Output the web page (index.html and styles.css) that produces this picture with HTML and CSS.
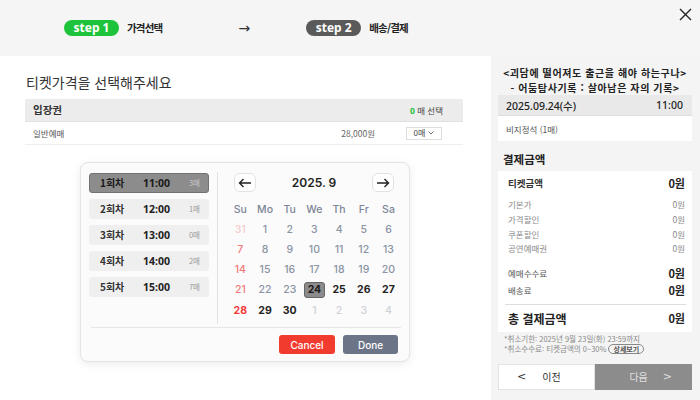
FILE: index.html
```html
<!DOCTYPE html>
<html lang="ko">
<head>
<meta charset="utf-8">
<link rel="stylesheet" href="styles.css">
</head>
<body>
<div class="page">
  <header class="top">
    <div class="step">
      <span class="pill pill-on">step 1</span>
      <span class="step-label">가격선택</span>
    </div>
    <span class="arrow">→</span>
    <div class="step">
      <span class="pill pill-off">step 2</span>
      <span class="step-label">배송/결제</span>
    </div>
    <svg class="close" width="13" height="13" viewBox="0 0 13 13" aria-label="닫기"><path d="M1 1L12 12M12 1L1 12" stroke="#222" stroke-width="1.4"/></svg>
  </header>
  <main class="main">
    <section class="left">
      <h1 class="title">티켓가격을 선택해주세요</h1>
      <div class="table">
        <div class="thead">
          <span class="th-name">입장권</span>
          <span class="th-sel"><b class="green">0</b> 매 선택</span>
        </div>
        <div class="trow">
          <span class="td-name">일반예매</span>
          <span class="td-price">28,000원</span>
          <span class="select">0매 <svg width="6" height="4" viewBox="0 0 6 4"><path d="M0.5 0.5L3 3L5.5 0.5" stroke="#777" fill="none" stroke-width="1"/></svg></span>
        </div>
      </div>

      <div class="popup">
        <div class="popup-top">
          <ul class="rounds">
            <li class="round active"><span class="r-no">1회차</span><span class="r-time">11:00</span><span class="r-cnt">3매</span></li>
            <li class="round"><span class="r-no">2회차</span><span class="r-time">12:00</span><span class="r-cnt">1매</span></li>
            <li class="round"><span class="r-no">3회차</span><span class="r-time">13:00</span><span class="r-cnt">0매</span></li>
            <li class="round"><span class="r-no">4회차</span><span class="r-time">14:00</span><span class="r-cnt">2매</span></li>
            <li class="round"><span class="r-no">5회차</span><span class="r-time">15:00</span><span class="r-cnt">7매</span></li>
          </ul>
          <div class="cal">
            <div class="cal-head">
              <span class="nav"><svg width="14" height="10" viewBox="0 0 14 10"><path d="M13 5H1.5M5.5 1L1.5 5L5.5 9" stroke="#222" stroke-width="1.4" fill="none"/></svg></span>
              <span class="month">2025. 9</span>
              <span class="nav"><svg width="14" height="10" viewBox="0 0 14 10"><path d="M1 5H12.5M8.5 1L12.5 5L8.5 9" stroke="#222" stroke-width="1.4" fill="none"/></svg></span>
            </div>
            <div class="grid">
              <span class="dn">Su</span><span class="dn">Mo</span><span class="dn">Tu</span><span class="dn">We</span><span class="dn">Th</span><span class="dn">Fr</span><span class="dn">Sa</span>
              <span class="d other-sun">31</span><span class="d past">1</span><span class="d past">2</span><span class="d past">3</span><span class="d past">4</span><span class="d past">5</span><span class="d past">6</span>
              <span class="d sun-past">7</span><span class="d past">8</span><span class="d past">9</span><span class="d past">10</span><span class="d past">11</span><span class="d past">12</span><span class="d past">13</span>
              <span class="d sun-past">14</span><span class="d past">15</span><span class="d past">16</span><span class="d past">17</span><span class="d past">18</span><span class="d past">19</span><span class="d past">20</span>
              <span class="d sun-past">21</span><span class="d past">22</span><span class="d past">23</span><span class="d"><i class="sel">24</i></span><span class="d on">25</span><span class="d on">26</span><span class="d on">27</span>
              <span class="d sun">28</span><span class="d on">29</span><span class="d on">30</span><span class="d other">1</span><span class="d other">2</span><span class="d other">3</span><span class="d other">4</span>
            </div>
          </div>
        </div>
        <div class="popup-line"></div>
        <div class="popup-btns">
          <button class="btn cancel">Cancel</button>
          <button class="btn done">Done</button>
        </div>
      </div>
    </section>

    <aside class="right">
      <div class="show-title"><p>&lt;괴담에 떨어져도 출근을 해야 하는구나&gt;</p><p>- 어둠탐사기록 : 살아남은 자의 기록&gt;</p></div>
      <div class="date-row"><span>2025.09.24(수)</span><span>11:00</span></div>
      <div class="seat-row">비지정석 (1매)</div>
      <h2 class="pay-title">결제금액</h2>
      <div class="pay-box">
        <div class="p-main"><span class="pl-b">티켓금액</span><span class="pv">0원</span></div>
        <div class="p-subs">
          <div class="p-sub"><span>기본가</span><span>0원</span></div>
          <div class="p-sub"><span>가격할인</span><span>0원</span></div>
          <div class="p-sub"><span>쿠폰할인</span><span>0원</span></div>
          <div class="p-sub"><span>공연예매권</span><span>0원</span></div>
        </div>
        <div class="p-fees">
          <div class="p-fee"><span>예매수수료</span><span class="pv">0원</span></div>
          <div class="p-fee"><span>배송료</span><span class="pv">0원</span></div>
        </div>
        <div class="p-total"><span>총 결제금액</span><span class="pv">0원</span></div>
      </div>
      <div class="notes">
        <p>*취소기한: 2025년 9월 23일(화) 23:59까지</p>
        <p>*취소수수료: 티켓금액의 0~30% <span class="detail">상세보기</span></p>
      </div>
      <div class="nav-btns">
        <button class="prev"><span class="chev">&lt;</span><span>이전</span></button>
        <button class="next"><span>다음</span><span class="chev">&gt;</span></button>
      </div>
    </aside>
  </main>
</div>
</body>
</html>
```

FILE: styles.css
```css
* { box-sizing: border-box; margin: 0; padding: 0; }
html, body { width: 700px; height: 400px; overflow: hidden; }
body {
  font-family: "Noto Sans CJK KR", "Noto Sans", sans-serif;
  color: #222;
  background: #fff;
}
button { font-family: inherit; border: none; background: none; cursor: pointer; outline: none; }
ul { list-style: none; }

.page { width: 700px; height: 400px; display: flex; flex-direction: column; }

/* header */
.top {
  height: 56px;
  background: #f5f5f5;
  display: flex;
  align-items: center;
  padding-left: 64px;
}
.step { display: flex; align-items: center; gap: 8px; }
.pill {
  display: inline-flex; align-items: center; justify-content: center;
  width: 55px; height: 16px; border-radius: 8px;
  color: #fff; font-family: "Noto Sans", sans-serif; font-weight: 700; font-size: 12px; line-height: 16px;
}
.pill-on { background: #1dc43b; }
.pill-off { background: #5a5a5a; }
.step-label { font-weight: 700; font-size: 10.5px; line-height: 16px; color: #222; letter-spacing: -0.8px; }
.arrow { margin-left: 76px; margin-right: 56px; font-family: "DejaVu Sans", sans-serif; font-size: 14px; color: #333; line-height: 16px; }
.close { margin-left: auto; align-self: flex-start; margin-top: 8px; margin-right: 8px; flex: none; }

/* main */
.main { flex: 1; display: flex; position: relative; }
.left { width: 491px; padding: 16px 28px 0 25px; position: relative; flex: none; }
.title { font-size: 14px; font-weight: 400; line-height: 20px; color: #333; margin-bottom: 7px; padding-left: 1px; }
.table { width: 438px; }
.thead {
  height: 23px; background: #ececec; display: flex; align-items: center; justify-content: space-between;
  padding: 0 20px 0 8px; border-bottom: 1px solid #e0e0e0;
}
.th-name { font-size: 10.5px; font-weight: 700; color: #333; line-height: 14px; }
.th-sel { font-size: 8.5px; color: #444; line-height: 12px; }
.green { color: #1dc43b; font-weight: 700; font-family: "Noto Sans", sans-serif; }
.trow {
  height: 23px; display: flex; align-items: center; padding: 0 21px 0 8px; border-bottom: 1px solid #efefef;
}
.td-name { flex: 1; font-size: 8.5px; color: #555; line-height: 12px; }
.td-price { font-size: 8.5px; color: #666; line-height: 12px; margin-right: 31px; }
.select {
  width: 36px; height: 13px; border: 1px solid #ddd; background: #fff;
  display: flex; align-items: center; justify-content: center; gap: 3px;
  font-size: 8px; color: #444; line-height: 10px;
}

/* popup */
.popup {
  position: absolute; left: 80px; top: 106px; width: 330px; height: 200px;
  background: #fbfbfb; border: 1px solid #e4e4e4; border-radius: 8px;
  box-shadow: 0 2px 8px rgba(0,0,0,0.08);
  padding: 9px 8px 0 8px;
}
.popup-top { display: flex; height: 152px; }
.rounds { flex: none; width: 120px; display: flex; flex-direction: column; gap: 6px; padding-top: 1px; margin-right: 8px; }
.round {
  height: 20px; border-radius: 3px; background: #efefef; display: flex; align-items: center;
  padding: 0 8px 0 10px; border: 1px solid #efefef;
}
.round.active { background: #8c8c8c; border-color: #727272; }
.r-no { font-size: 10px; font-weight: 700; color: #333; width: 43px; line-height: 14px; }
.r-time { font-family: "Noto Sans", sans-serif; font-size: 10.5px; font-weight: 700; color: #222; flex: 1; line-height: 14px; }
.r-cnt { font-size: 7.5px; color: #999; line-height: 10px; }
.round.active .r-cnt { color: #c9c9c9; }
.round.active .r-no, .round.active .r-time { color: #1a1a1a; }

.cal { flex: 1; border-left: 1px solid #e3e3e3; padding-left: 10px; }
.cal-head { display: flex; align-items: center; justify-content: space-between; padding: 0 7px 0 6px; width: 173px; height: 19px; margin-top: 1px; }
.nav {
  width: 22px; height: 19px; border: 1px solid #e2e2e2; border-radius: 6px; background: #fff;
  display: flex; align-items: center; justify-content: center;
}
.month { font-family: "Inter", sans-serif; font-weight: 600; font-size: 12px; color: #222; line-height: 16px; }
.grid { display: grid; grid-template-columns: repeat(7, 24.7px); grid-auto-rows: 20.2px; margin-top: 7px; }
.dn, .d {
  display: flex; align-items: center; justify-content: center;
  font-family: "Inter", sans-serif; font-size: 10.5px; font-weight: 500;
}
.dn { color: #7d8696; }
.d { color: #8a93a3; }
.d.on { color: #222; font-weight: 700; }
.d.sun { color: #f23a3a; font-weight: 700; }
.d.sun-past { color: #f07a7a; }
.d.other-sun { color: #f6cccc; }
.d.other { color: #cfd2d7; }
.sel {
  font-style: normal; width: 21px; height: 16px; border-radius: 3px; background: #8b8b8b; border: 1px solid #666;
  display: flex; align-items: center; justify-content: center; color: #1a1a1a; font-weight: 700;
}
.popup-line { height: 1px; background: #e6e6e6; margin: 3px 0 0 2px; }
.popup-btns { display: flex; justify-content: flex-end; gap: 8px; margin-top: 7px; padding-right: 3px; }
.btn {
  height: 19px; border-radius: 3px; color: #fff; font-family: "Inter", sans-serif; font-size: 10px; font-weight: 500;
  display: flex; align-items: center; justify-content: center;
}
.cancel { width: 56px; background: #f23b2f; }
.done { width: 55px; background: #6b7587; }

/* right */
.right { flex: none; width: 209px; background: #f4f4f4; padding: 10px 8px 0 7px; display: flex; flex-direction: column; }
.show-title { text-align: center; font-size: 10px; font-weight: 700; line-height: 14.5px; color: #222; letter-spacing: 0.6px; }
.show-title p { height: 14.5px; white-space: nowrap; }
.date-row {
  margin-top: 0; height: 21px; background: #e9e9e9; display: flex; align-items: center; justify-content: space-between;
  padding: 0 9px 0 8px; font-family: "Noto Sans", "Noto Sans CJK KR", sans-serif; font-size: 10.5px; font-weight: 500; color: #222;
  border-bottom: 1px solid #dedede;
}
.seat-row { height: 25px; background: #fff; display: flex; align-items: center; padding-left: 8px; font-size: 8.5px; color: #555; }
.pay-title { font-size: 11.5px; font-weight: 700; line-height: 16px; color: #222; margin: 10px 0 4px 5px; }
.pay-box { background: #fff; padding: 0 7px 0 10px; }
.p-main { height: 24px; display: flex; align-items: center; justify-content: space-between; }
.pl-b { font-size: 9.5px; font-weight: 700; color: #333; }
.pv { font-family: "Noto Sans CJK KR", sans-serif; font-size: 11px; font-weight: 700; color: #222; }
.p-subs { margin-top: 2px; }
.p-sub { height: 14.7px; display: flex; align-items: center; justify-content: space-between; font-size: 8.5px; color: #8a8a8a; }
.p-fees { margin-top: 9px; }
.p-fee { height: 17px; display: flex; align-items: center; justify-content: space-between; font-size: 8.5px; color: #555; }
.p-total {
  margin-top: 5px; margin-left: -3px; margin-right: -1px; padding: 0 1px 0 3px;
  height: 28px; border-top: 1px solid #dedede; display: flex; align-items: center; justify-content: space-between;
}
.p-total span:first-child { font-size: 12px; font-weight: 700; color: #222; }
.notes { padding: 2px 0 0 6px; font-size: 7.5px; line-height: 10.5px; color: #8a8a8a; }
.detail { display: inline-block; border: 1px solid #888; border-radius: 6px; padding: 0 4px; line-height: 8px; font-size: 7px; color: #555; font-weight: 700; }
.nav-btns { display: flex; margin-top: 9px; }
.prev, .next { height: 26px; width: 97px; display: flex; align-items: center; font-size: 10px; }
.prev { background: #fff; border: 1px solid #e2e2e2; padding-left: 18px; gap: 16px; color: #333; }
.next { background: #8c8c8c; justify-content: flex-end; padding-right: 20px; gap: 15px; color: #e0e0e0; }
.chev { font-family: "DejaVu Sans", sans-serif; font-size: 11px; }
```
